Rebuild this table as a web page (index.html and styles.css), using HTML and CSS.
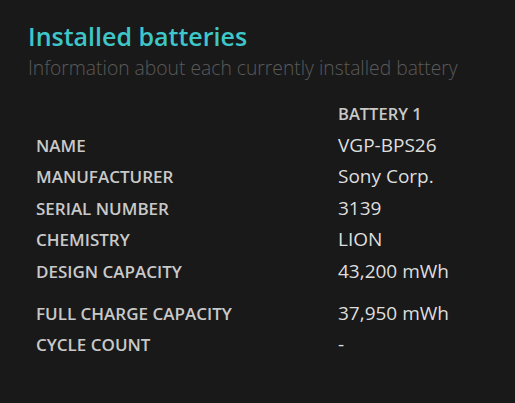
FILE: index.html
```html
<!DOCTYPE html>
<html>
<head>
<meta charset="utf-8">
<link rel="stylesheet" href="styles.css">
</head>
<body>
<main class="page">
  <h1 class="title">Installed batteries</h1>
  <p class="subtitle">Information about each currently installed battery</p>
  <div class="table">
    <div class="row"><div class="label"></div><div class="head">BATTERY 1</div></div>
    <div class="row"><div class="label">NAME</div><div class="value">VGP-BPS26</div></div>
    <div class="row"><div class="label">MANUFACTURER</div><div class="value">Sony Corp.</div></div>
    <div class="row"><div class="label">SERIAL NUMBER</div><div class="value">3139</div></div>
    <div class="row"><div class="label">CHEMISTRY</div><div class="value">LION</div></div>
    <div class="row"><div class="label">DESIGN CAPACITY</div><div class="value">43,200 mWh</div></div>
    <div class="row row-gap"><div class="label">FULL CHARGE CAPACITY</div><div class="value">37,950 mWh</div></div>
    <div class="row"><div class="label">CYCLE COUNT</div><div class="value">-</div></div>
  </div>
</main>
</body>
</html>
```
FILE: styles.css
```css
html, body {
  margin: 0;
  padding: 0;
  background: #191919;
  height: 100%;
}
.page {
  padding: 21px 28px 0 28px;
  font-family: "Open Sans", "Noto Sans", sans-serif;
}
.title {
  margin: 0;
  font-size: 25px;
  font-weight: 600;
  color: #3ec6c8;
  line-height: 30px;
}
.subtitle {
  margin: 4px 0 0 0;
  font-size: 19.3px;
  font-weight: 300;
  color: #5a5a5a;
  line-height: 26px;
  white-space: nowrap;
}
.table {
  margin-top: 17px;
  padding-left: 8px;
  display: flex;
  flex-direction: column;
}
.row {
  display: flex;
  align-items: baseline;
  height: 31.5px;
  line-height: 31.5px;
}
.row-gap {
  margin-top: 10.5px;
}
.label {
  width: 302px;
  flex: none;
  font-size: 17px;
  font-weight: 600;
  color: #c9c9c9;
}
.head {
  font-size: 16.5px;
  font-weight: 600;
  color: #c9c9c9;
}
.value {
  font-size: 19px;
  color: #dedede;
}
```
